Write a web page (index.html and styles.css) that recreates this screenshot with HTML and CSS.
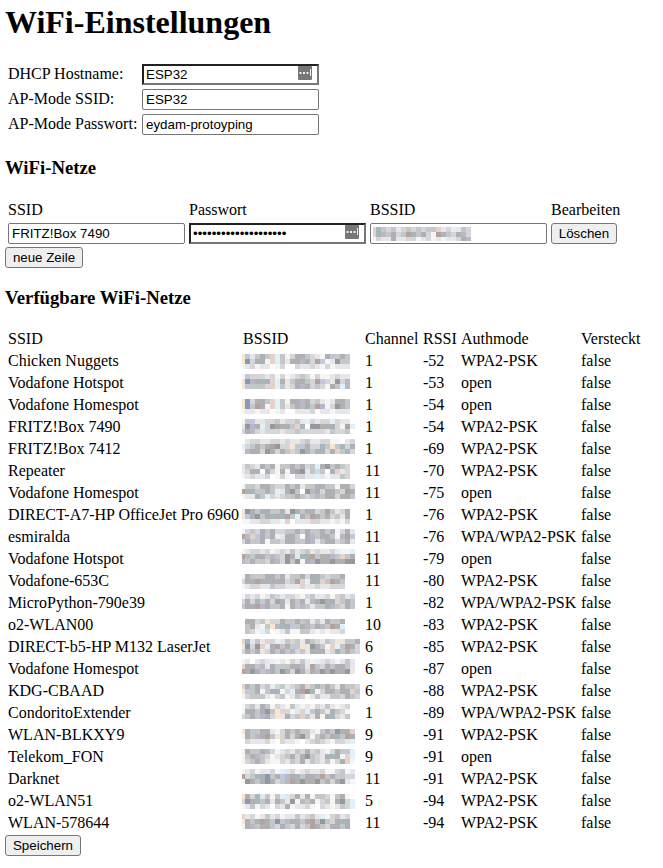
FILE: index.html
```html
<!DOCTYPE html>
<html lang="de">
<head>
<meta charset="utf-8">
<title>WiFi-Einstellungen</title>
<link rel="stylesheet" href="styles.css">
</head>
<body>
<h1>WiFi-Einstellungen</h1>
<table class="settings">
<tr><td>DHCP Hostname:</td><td><span class="field"><input class="marked" value="ESP32"><svg class="key" width="14" height="14" viewBox="0 0 14 14"><rect width="14" height="14" rx="1" fill="#777"/><path d="M1.500 6h2v2h-2zM5 6h2v2H5zM8.500 6h2v2h-2zM12 3h1v7h-1z" fill="#eee"/></svg></span></td></tr>
<tr><td>AP-Mode SSID:</td><td><input value="ESP32"></td></tr>
<tr><td>AP-Mode Passwort:</td><td><input value="eydam-protoyping"></td></tr>
</table>
<h3>WiFi-Netze</h3>
<table class="known">
<tr class="head"><td>SSID</td><td>Passwort</td><td>BSSID</td><td>Bearbeiten</td></tr>
<tr><td><input value="FRITZ!Box 7490"></td><td><span class="field"><input class="marked" type="password" value="12345678901234567890"><svg class="key" width="14" height="14" viewBox="0 0 14 14"><rect width="14" height="14" rx="1" fill="#777"/><path d="M1.500 6h2v2h-2zM5 6h2v2H5zM8.500 6h2v2h-2zM12 3h1v7h-1z" fill="#eee"/></svg></span></td><td><span class="field"><input><svg class="hidden-id" id="own" width="98" height="14" shape-rendering="crispEdges"></svg></span></td><td><button>Löschen</button></td></tr>
</table>
<button class="add">neue Zeile</button>
<h3 class="available">Verfügbare WiFi-Netze</h3>
<table class="networks">
<colgroup><col class="c1"><col class="c2"><col class="c3"><col class="c4"><col class="c5"><col class="c6"></colgroup>
<thead><tr><td>SSID</td><td>BSSID</td><td>Channel</td><td>RSSI</td><td>Authmode</td><td>Versteckt</td></tr></thead>
<tbody id="list"></tbody>
</table>
<button class="save">Speichern</button>
<script src="networks.js"></script>
</body>
</html>
```
FILE: styles.css
```css
body { margin: 4px 5px 0; background: #fff; color: #000; font: 16px/18px "Liberation Serif", "Times New Roman", serif; }
h1 { margin: 0 0 20px; font-size: 32px; line-height: 37px; }
h3 { margin: 19px 0; font-size: 18.72px; line-height: 21px; }
table { border-spacing: 2px; }
td { padding: 1px; white-space: nowrap; }
.settings td { height: 21px; }
.settings td:first-child { width: 130px; padding-top: 0; padding-bottom: 2px; }
input, button { display: block; box-sizing: border-box; margin: 0; font: 13.333px/15px "Liberation Sans", Arial, sans-serif; color: #000; }
input { width: 177px; height: 21px; padding: 1px 3px; border: 1px solid #767676; border-radius: 2px; background: #fff; outline: 0; }
input.marked { padding: 1px 2px; border: 2px inset #767676; border-radius: 0; }
button { height: 21px; padding: 1px 0; border: 1px solid #767676; border-radius: 3px; background: #efefef; }
.field { display: block; position: relative; }
.key { position: absolute; right: 7px; top: 2px; }
.hidden-id { position: absolute; left: 3px; top: 4px; }
.known { height: 50px; }
.known td:nth-child(-n+3) { width: 177px; }
.known .head td { padding-top: 2px; padding-bottom: 0; }
.known button { width: 66px; }
.add { width: 78px; }
.save { width: 76px; }
.networks { table-layout: fixed; width: 637px; }
.networks td { height: 20px; box-sizing: border-box; }
.c1 { width: 233px; }
.c2 { width: 120px; }
.c3 { width: 56px; }
.c4 { width: 36px; }
.c5 { width: 118px; }
.c6 { width: 60px; }
.networks td.id { padding-left: 0; padding-right: 0; }
.id svg { display: block; overflow: visible; }
```
FILE: networks.js
```js
const shades = {
  '.': '#ffffff', y: '#f5f5f3', a: '#e7e7e9', b: '#d6d6d8', c: '#c4c7c9', d: '#aeb0b3', e: '#959999',
  B: '#8998b8', l: '#c0c8dd', v: '#bab7c9', p: '#e6d2c8', o: '#fae6cf', s: '#dff1fb',
  r: '#b5a19e', g: '#c2cbc6', t: '#a5b7be'
};

// name, channel, signal, mode, three lines of hidden address cells
const networks = [
  ['Chicken Nuggets', '1', '-52', 'WPA2-PSK', 'olacdgpscybddcbaydcgdc', 'oBbddypscaddvdbrlyaecg', 'yabyaa.yb..baabaybyaaa'],
  ['Vodafone Hotspot', '1', '-53', 'open', 'ylbbbabybyabcbybyyabaa', 'oBvdtdpsdacddcbrlbaebv', 'olcccbpscabdvdbcbydcsv'],
  ['Vodafone Homespot', '1', '-54', 'open', 'oBbddcpscyddvdbcayaddc', 'oBcrdypscacdvdcrvybedc', 'yaayaa.ya..aaab.aayaaa'],
  ['FRITZ!Box 7490', '1', '-54', 'WPA2-PSK', 'yclaabbgabbcasbabbsbaa', 'aevdsberddcpt.eedddbyrs', 'bdvbabbbabbcbbbbbacbbc'],
  ['FRITZ!Box 7412', '1', '-69', 'WPA2-PSK', '.abbaabbabaabcaabbyy.ab', 'sbcdcdrebbocldbbtcoctbd', 'yvddbedbdcbcedgtdbdpctb'],
  ['Repeater', '11', '-70', 'WPA2-PSK', 'acbadcdyccdcdbcsdecdcb', 'abdt.dbydydreacbc.dpab', 'yabaab.yby.bbaasayaacb'],
  ['Vodafone Homespot', '11', '-75', 'open', 'ygcbddcbbdcdagcddccyddb', 'rdtccdcsadec.evdbddcbrd', 'yaadcsbabgcdcbcvcddbddc'],
  ['DIRECT-A7-HP OfficeJet Pro 6960', '1', '-76', 'WPA2-PSK', 'oBdcddccdaedcdtbcrcabd', 'oldecdtdtrcsdcrdcdbcad', 'yyaabbaayb.aaabbaayayb'],
  ['esmiralda', '11', '-76', 'WPA/WPA2-PSK', 'ybcbdcdbbccdgdccdgdybda', 'rvpldcdsaddg.dvcddcyvrl', 'bdccdyccbddccdvacddbcda'],
  ['Vodafone Hotspot', '11', '-79', 'open', 'yabbabyabacabcabaabsyys', 'rvcddcvcbedatdrcddvcpcd', 'vcdgcbdvbeceydveddeddee'],
  ['Vodafone-653C', '11', '-80', 'WPA2-PSK', 'ydcgcddcdaccdbddcbccd', 'bddrdddddbcrpsdtpcrdc', 'yabbaacbbaaabaabaabbb'],
  ['MicroPython-790e39', '1', '-82', 'WPA/WPA2-PSK', 'ybabyacbabbaybcaabybcab', 'bdbtgdbrtadcdavdetdpcdc', 'cddrvdcgdydcvcaggdvcbdc'],
  ['o2-WLAN00', '10', '-83', 'WPA2-PSK', '.ddbgobbdgcdcvacadccd', '.cdaygovtdlcdvcdvcrds', '.cbysb.yacyycgayayaab'],
  ['DIRECT-b5-HP M132 LaserJet', '6', '-85', 'WPA2-PSK', 'ptacapbsacbgadcbacboaccd', 'oBbepsdrcdgloaedcypscrdb', 'bdcdabdcdcvbcadddabdcdcb'],
  ['Vodafone Homespot', '6', '-87', 'open', 'ya.abasyaybacaysabayaca', 'pddcvadlgcddvarcbdcddca', 'rdedcvdcedbedbdvededdea'],
  ['KDG-CBAAD', '6', '-88', 'WPA2-PSK', 'ptcdbcsbgabcdpcdcdcadccb', 'olcdycdtybsdretybddcddpc', 'ybcccaybcyacbyacaaccbdcb'],
  ['CondoritoExtender', '1', '-89', 'WPA/WPA2-PSK', 'ybcadcybaycayaybacayab', 'yddcdecopbyabscdcadcby', 'bcdcvdboadbcpcadydtbac'],
  ['WLAN-BLKXY9', '9', '-91', 'WPA2-PSK', 'odccddaybdcdccaycdceddp', 'ydcvdrcobdbdecycdcdtcrd', '.baaaby.baay.abcbaybbas'],
  ['Telekom_FON', '9', '-91', 'open', 'ydccdvbyabacbdbcaybdcls', 'ycdvcbyabcdbdecbadtdyps', 'ybcdcayybacbdacbacybdpy'],
  ['Darknet', '11', '-91', 'WPA2-PSK', 'yabyaabysabyabaabyybcya', 'rbctdBcdlvdtcddvrcdgcbb', 'yedcdedbcvrdeddecdbdeay'],
  ['o2-WLAN51', '5', '-94', 'WPA2-PSK', 'odbtacycsabdadyccbycdy', 'pBdtcdadcaeyvcdybcydebs', 'yacyba.badyaaby.bayacbs'],
  ['WLAN-578644', '11', '-94', 'WPA2-PSK', 'pabyagabyaacabcasybcab', 'odcdrdcBcvdtcdrcecbdtd', 'ydvcddcbdcbdbcrdcbddcd']
];

function cells(lines, shift) {
  return lines.map((line, row) => [...line].map((c, i) =>
    `<rect x="${i ? 5 * i - 2 : 0}" y="${shift + row * 5}" width="${i ? 5 : 3}" height="5" fill="${shades[c]}"/>`
  ).join('')).join('');
}

document.getElementById('list').innerHTML = networks.map((n, i) =>
  `<tr><td>${n[0]}</td><td class="id"><svg width="120" height="18" shape-rendering="crispEdges">${cells(n.slice(4), [2, 0, 3, 1, -1][i % 5])}</svg></td>` +
  `<td>${n[1]}</td><td>${n[2]}</td><td>${n[3]}</td><td>false</td></tr>`
).join('');

document.getElementById('own').innerHTML =
  cells(['ptcbcabcbcbgcpabsacb', 'ptvcdbcrtcdbyrtcbdvb', 'ybaadaabbyabyayaabdv'], 0);
```
